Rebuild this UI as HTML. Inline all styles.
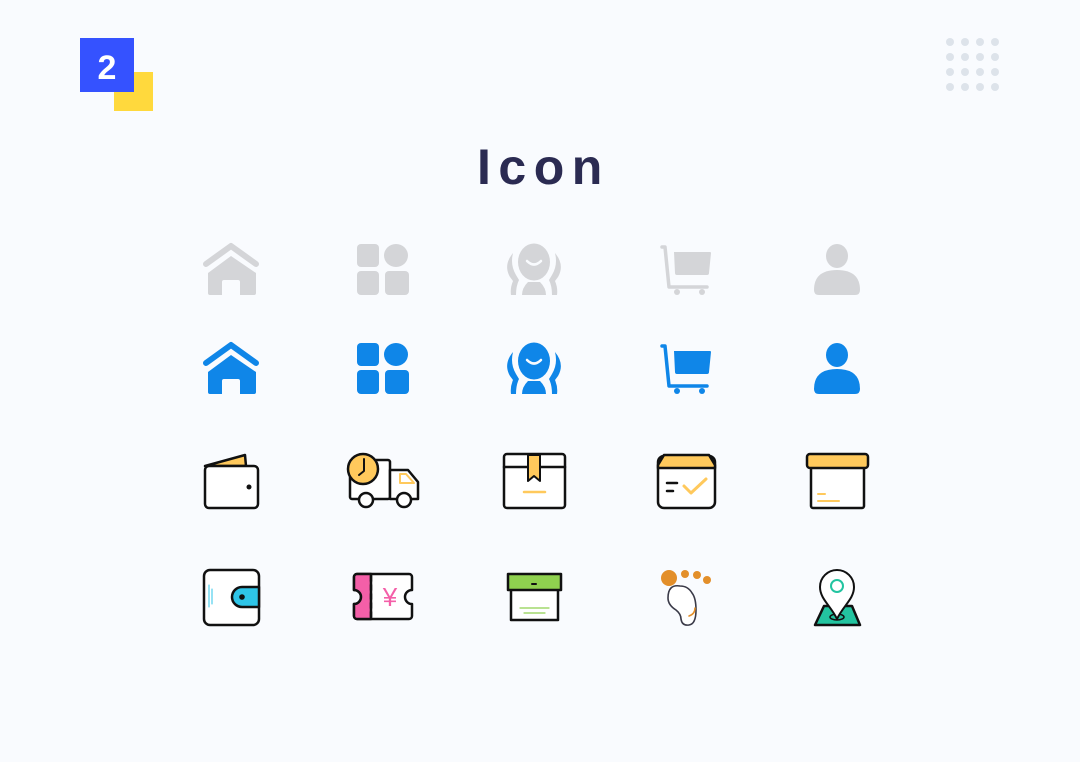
<!DOCTYPE html>
<html><head><meta charset="utf-8"><style>
html,body{margin:0;padding:0;background:#f9fbfe;}
svg{display:block}
</style></head><body>
<svg width="1080" height="762" viewBox="0 0 1080 762" xmlns="http://www.w3.org/2000/svg">
<rect width="1080" height="762" fill="#f9fbfe"/>
<rect x="114" y="72" width="39" height="39" fill="#ffd93d"/>
<rect x="80" y="38" width="54" height="54" fill="#3552ff"/>
<text x="107" y="79" text-anchor="middle" font-family="Liberation Sans, sans-serif" font-weight="bold" font-size="34" fill="#fff">2</text>
<g fill="#dde3ea">
<circle cx="950" cy="42" r="4"/><circle cx="965" cy="42" r="4"/><circle cx="980" cy="42" r="4"/><circle cx="995" cy="42" r="4"/>
<circle cx="950" cy="57" r="4"/><circle cx="965" cy="57" r="4"/><circle cx="980" cy="57" r="4"/><circle cx="995" cy="57" r="4"/>
<circle cx="950" cy="72" r="4"/><circle cx="965" cy="72" r="4"/><circle cx="980" cy="72" r="4"/><circle cx="995" cy="72" r="4"/>
<circle cx="950" cy="87" r="4"/><circle cx="965" cy="87" r="4"/><circle cx="980" cy="87" r="4"/><circle cx="995" cy="87" r="4"/>
</g>
<text x="477" y="184" font-family="Liberation Sans, sans-serif" font-weight="bold" font-size="50" letter-spacing="7.5" fill="#2b2b52">Icon</text>

<g fill="#d4d5d8">
<path d="M206,264 L231,246 L256,264" fill="none" stroke="#d4d5d8" stroke-width="6" stroke-linecap="round" stroke-linejoin="round"/>
<path d="M208,273 L231,256 L256,273 V293 a2,2 0 0 1 -2,2 H240 V282 a2,2 0 0 0 -2,-2 H224 a2,2 0 0 0 -2,2 V295 H210 a2,2 0 0 1 -2,-2 Z"/>
<rect x="357" y="244" width="22" height="23" rx="4"/>
<ellipse cx="396" cy="255.5" rx="12" ry="11.5"/>
<rect x="357" y="271" width="22" height="24" rx="4"/>
<rect x="385" y="271" width="24" height="24" rx="4"/>
<ellipse cx="534" cy="262" rx="16" ry="18.5"/>
<path d="M527,261 q7,7 14,0" fill="none" stroke="#f9fbfe" stroke-width="2.5" stroke-linecap="round"/>
<path d="M513,253 q-10,12 -3,24 l3,4 q-3,7 -2,14 h5 q0,-9 3,-15 l-3,-5 q-6,-10 -3,-22 z"/>
<path d="M555,253 q10,12 3,24 l-3,4 q3,7 2,14 h-5 q0,-9 -3,-15 l3,-5 q6,-10 3,-22 z"/>
<path d="M528,282 h12 q6,6 6,13 h-24 q0,-7 6,-13 z"/>
<path d="M662,247 h3 l4,40 h38" fill="none" stroke="#d4d5d8" stroke-width="3.5" stroke-linecap="round" stroke-linejoin="round"/>
<path d="M674,252 h36 a1,1 0 0 1 1,1 l-2,20 a2,2 0 0 1 -2,2 h-30 a2,2 0 0 1 -2,-2 z"/>
<circle cx="677" cy="292" r="3"/><circle cx="702" cy="292" r="3"/>
<ellipse cx="837" cy="256" rx="11" ry="12"/>
<path d="M814,290 q0,-20 23,-20 q23,0 23,20 q0,5 -5,5 h-36 q-5,0 -5,-5 z"/>
</g>
<g fill="#0f86e8" transform="translate(0,99)">
<path d="M206,264 L231,246 L256,264" fill="none" stroke="#0f86e8" stroke-width="6" stroke-linecap="round" stroke-linejoin="round"/>
<path d="M208,273 L231,256 L256,273 V293 a2,2 0 0 1 -2,2 H240 V282 a2,2 0 0 0 -2,-2 H224 a2,2 0 0 0 -2,2 V295 H210 a2,2 0 0 1 -2,-2 Z"/>
<rect x="357" y="244" width="22" height="23" rx="4"/>
<ellipse cx="396" cy="255.5" rx="12" ry="11.5"/>
<rect x="357" y="271" width="22" height="24" rx="4"/>
<rect x="385" y="271" width="24" height="24" rx="4"/>
<ellipse cx="534" cy="262" rx="16" ry="18.5"/>
<path d="M527,261 q7,7 14,0" fill="none" stroke="#f9fbfe" stroke-width="2.5" stroke-linecap="round"/>
<path d="M513,253 q-10,12 -3,24 l3,4 q-3,7 -2,14 h5 q0,-9 3,-15 l-3,-5 q-6,-10 -3,-22 z"/>
<path d="M555,253 q10,12 3,24 l-3,4 q3,7 2,14 h-5 q0,-9 -3,-15 l3,-5 q6,-10 3,-22 z"/>
<path d="M528,282 h12 q6,6 6,13 h-24 q0,-7 6,-13 z"/>
<path d="M662,247 h3 l4,40 h38" fill="none" stroke="#0f86e8" stroke-width="3.5" stroke-linecap="round" stroke-linejoin="round"/>
<path d="M674,252 h36 a1,1 0 0 1 1,1 l-2,20 a2,2 0 0 1 -2,2 h-30 a2,2 0 0 1 -2,-2 z"/>
<circle cx="677" cy="292" r="3"/><circle cx="702" cy="292" r="3"/>
<ellipse cx="837" cy="256" rx="11" ry="12"/>
<path d="M814,290 q0,-20 23,-20 q23,0 23,20 q0,5 -5,5 h-36 q-5,0 -5,-5 z"/>
</g>

<g stroke="#111" stroke-width="2.5" stroke-linejoin="round" stroke-linecap="round">
<path d="M205,466 L245,455 L246,466 Z" fill="#ffc95c"/>
<rect x="205" y="466" width="53" height="42" rx="4" fill="#fff"/>
<circle cx="249" cy="487" r="2.5" fill="#111" stroke="none"/>
<rect x="350" y="460" width="40" height="39" rx="2" fill="#fff"/>
<path d="M390,470 H408 L418,482 V499 H390 Z" fill="#fff"/>
<path d="M400,474 H406 L414,483 H400 Z" fill="none" stroke="#ffc95c" stroke-width="2"/>
<circle cx="363" cy="469" r="15" fill="#ffc95c"/>
<path d="M364,459 V471 L359,475" fill="none" stroke-width="2"/>
<circle cx="366" cy="500" r="7" fill="#fff"/>
<circle cx="404" cy="500" r="7" fill="#fff"/>
<rect x="504" y="454" width="61" height="54" rx="3" fill="#fff"/>
<line x1="504" y1="467" x2="565" y2="467"/>
<path d="M528,455 h12 v26 l-6,-5 l-6,5 z" fill="#ffc95c" stroke-width="2"/>
<line x1="524" y1="492" x2="545" y2="492" stroke="#ffc95c" stroke-width="2.5"/>
<rect x="658" y="456" width="57" height="52" rx="6" fill="#fff"/>
<path d="M664,455 H709 L715,465 V468 H658 V465 Z" fill="#ffc95c"/>
<line x1="667" y1="483" x2="677" y2="483" stroke-width="2.5"/>
<line x1="667" y1="491" x2="673" y2="491" stroke-width="2.5"/>
<path d="M684,486 L691,493 L706,479" fill="none" stroke="#ffc95c" stroke-width="3"/>
<rect x="811" y="466" width="53" height="42" rx="2" fill="#fff"/>
<rect x="807" y="454" width="61" height="14" rx="3" fill="#ffc95c"/>
<line x1="818" y1="494" x2="825" y2="494" stroke="#ffc95c" stroke-width="2"/>
<line x1="818" y1="501" x2="839" y2="501" stroke="#ffc95c" stroke-width="2"/>
<rect x="204" y="570" width="55" height="55" rx="6" fill="#fff"/>
<path d="M259,587 H242 a10,10 0 0 0 0,20 H259 Z" fill="#2ec5e8"/>
<circle cx="242" cy="597" r="2.8" fill="#111" stroke="none"/>
<line x1="209" y1="585" x2="209" y2="607" stroke="#2ec5e8" stroke-width="1"/>
<line x1="212" y1="589" x2="212" y2="604" stroke="#2ec5e8" stroke-width="1"/>
<path d="M357,574 H409 a3,3 0 0 1 3,3 V590 a7,7 0 0 0 0,14 V616 a3,3 0 0 1 -3,3 H357 a3,3 0 0 1 -3,-3 V604 a7,7 0 0 0 0,-14 V577 a3,3 0 0 1 3,-3 Z" fill="#fff"/>
<path d="M357,574 H371 V619 H357 a3,3 0 0 1 -3,-3 V604 a7,7 0 0 0 0,-14 V577 a3,3 0 0 1 3,-3 Z" fill="#f45fa8"/>
<line x1="371" y1="576" x2="371" y2="618" stroke-dasharray="5 4"/>
<rect x="511" y="588" width="47" height="32" fill="#fff"/>
<rect x="508" y="574" width="53" height="16" fill="#8fd14f"/>
<line x1="532" y1="584" x2="536" y2="584" stroke-width="2"/>
<line x1="520" y1="608" x2="549" y2="608" stroke="#8fd14f" stroke-width="1.2"/>
<line x1="524" y1="613" x2="545" y2="613" stroke="#8fd14f" stroke-width="1.2"/>
<path d="M680,586 q-12,-2 -12,12 q0,7 8,12 q5,4 5,9 q1,7 8,6 q7,-1 7,-15 q0,-12 -4,-17 q-4,-7 -12,-7 z" fill="#fff" stroke="#3a3a48" stroke-width="1.6"/>
<path d="M695,608 q0,6 -6,8" fill="none" stroke="#e38f2a" stroke-width="1.6"/>
<path d="M824,606 H852 L860,625 H815 Z" fill="#23c4a0"/>
<ellipse cx="837" cy="617" rx="7" ry="3" fill="none" stroke-width="1.5"/>
<path d="M837,619 C831,606 820,599 820,587 a17,17 0 0 1 34,0 C854,599 843,606 837,619 Z" fill="#fff" stroke-width="2"/>
<circle cx="837" cy="586" r="6" fill="none" stroke="#23c4a0" stroke-width="2"/>
</g>
<text x="390" y="606" text-anchor="middle" font-family="Liberation Sans, 'Noto Sans CJK SC', sans-serif" font-size="26" fill="#f45fa8">¥</text>
<g fill="#e38f2a">
<circle cx="669" cy="578" r="8"/><circle cx="685" cy="574" r="4"/><circle cx="697" cy="575" r="4"/><circle cx="707" cy="580" r="4"/>
</g>
</svg>
</body></html>
